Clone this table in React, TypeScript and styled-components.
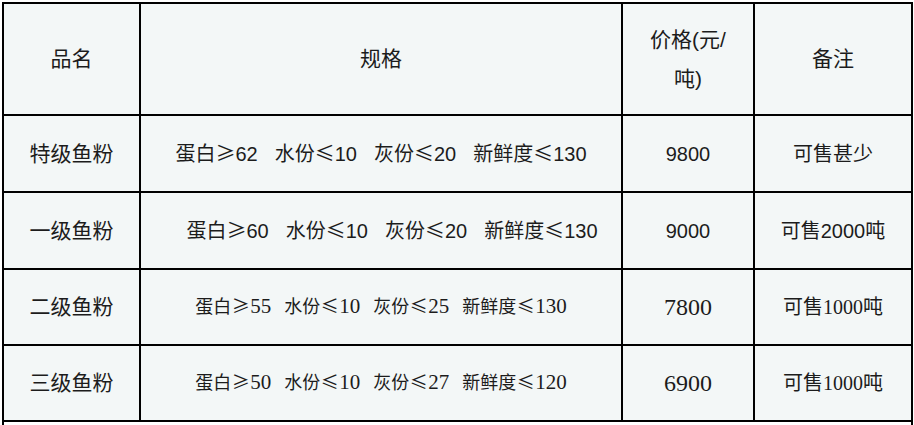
import React from "react";
import styled, { createGlobalStyle } from "styled-components";

const Global = createGlobalStyle`
  html, body {
    margin: 0;
    padding: 0;
    background: #ffffff;
    overflow: hidden;
  }
  body {
    font-family: "Liberation Sans", "Noto Sans CJK SC", sans-serif;
    color: #1c1c1c;
  }
`;

const SANS = `"Liberation Sans", "Noto Sans CJK SC", sans-serif`;
const SERIF = `"Liberation Serif", "Noto Sans CJK SC", serif`;
const CJK = `"Noto Sans CJK SC", sans-serif`;

const Grid = styled.div`
  display: grid;
  grid-template-columns: 135px 480px 130px 156px;
  grid-template-rows: 110px 75px 75px 74px 74px 20px;
  gap: 2px;
  padding: 2px;
  background: #000;
  width: max-content;
  margin: 2px 0 0 2px;
`;

const Cell = styled.div<{ $serif?: boolean; $size?: number; $lh?: number }>`
  display: flex;
  align-items: center;
  justify-content: center;
  text-align: center;
  background: #f3f7f7;
  font-family: ${(p) => (p.$serif ? SERIF : SANS)};
  font-size: ${(p) => p.$size ?? 21}px;
  line-height: ${(p) => (p.$lh ? `${p.$lh}px` : "1.2")};
  white-space: nowrap;
`;

const Footer = styled.div`
  grid-column: 1 / -1;
  background: #ffffff;
`;

const SpecLine = styled.div<{ $gap: number; $shift: number }>`
  display: flex;
  align-items: baseline;
  gap: ${(p) => p.$gap}px;
  padding-left: ${(p) => p.$shift}px;
`;

const Segment = styled.span`
  display: inline-flex;
  align-items: baseline;
`;

const Label = styled.span<{ $size: number }>`
  font-family: ${CJK};
  font-size: ${(p) => p.$size}px;
`;

const Op = styled.span<{ $w: number; $size: number }>`
  font-family: ${CJK};
  font-size: ${(p) => p.$size}px;
  display: inline-block;
  width: ${(p) => p.$w}px;
  text-align: center;
`;

type Row = {
  name: string;
  spec: [string, string, string][];
  price: string;
  note: string;
  serif: boolean;
  shift: number;
};

const rows: Row[] = [
  {
    name: "特级鱼粉",
    spec: [
      ["蛋白", "≥", "62"],
      ["水份", "≤", "10"],
      ["灰份", "≤", "20"],
      ["新鲜度", "≤", "130"],
    ],
    price: "9800",
    note: "可售甚少",
    serif: false,
    shift: 0,
  },
  {
    name: "一级鱼粉",
    spec: [
      ["蛋白", "≥", "60"],
      ["水份", "≤", "10"],
      ["灰份", "≤", "20"],
      ["新鲜度", "≤", "130"],
    ],
    price: "9000",
    note: "可售2000吨",
    serif: false,
    shift: 22,
  },
  {
    name: "二级鱼粉",
    spec: [
      ["蛋白", "≥", "55"],
      ["水份", "≤", "10"],
      ["灰份", "≤", "25"],
      ["新鲜度", "≤", "130"],
    ],
    price: "7800",
    note: "可售1000吨",
    serif: true,
    shift: 0,
  },
  {
    name: "三级鱼粉",
    spec: [
      ["蛋白", "≥", "50"],
      ["水份", "≤", "10"],
      ["灰份", "≤", "27"],
      ["新鲜度", "≤", "120"],
    ],
    price: "6900",
    note: "可售1000吨",
    serif: true,
    shift: 0,
  },
];

export default function App() {
  return (
    <>
      <Global />
      <Grid>
        <Cell>品名</Cell>
        <Cell>规格</Cell>
        <Cell $lh={39}>
          <span>
            价格(元/
            <br />
            吨)
          </span>
        </Cell>
        <Cell>备注</Cell>
        {rows.map((r) => (
          <React.Fragment key={r.name}>
            <Cell>{r.name}</Cell>
            <Cell $serif={r.serif} $size={r.serif ? 21 : 20}>
              <SpecLine $gap={r.serif ? 13 : 17} $shift={r.shift}>
                {r.spec.map(([label, op, val]) => (
                  <Segment key={label}>
                    <Label $size={r.serif ? 18 : 20}>{label}</Label>
                    <Op $w={r.serif ? 19 : 20} $size={r.serif ? 18 : 20}>
                      {op}
                    </Op>
                    <span>{val}</span>
                  </Segment>
                ))}
              </SpecLine>
            </Cell>
            <Cell $serif={r.serif} $size={r.serif ? 24 : 20}>
              {r.price}
            </Cell>
            <Cell $serif={r.serif} $size={20}>
              {r.note}
            </Cell>
          </React.Fragment>
        ))}
        <Footer />
      </Grid>
    </>
  );
}
